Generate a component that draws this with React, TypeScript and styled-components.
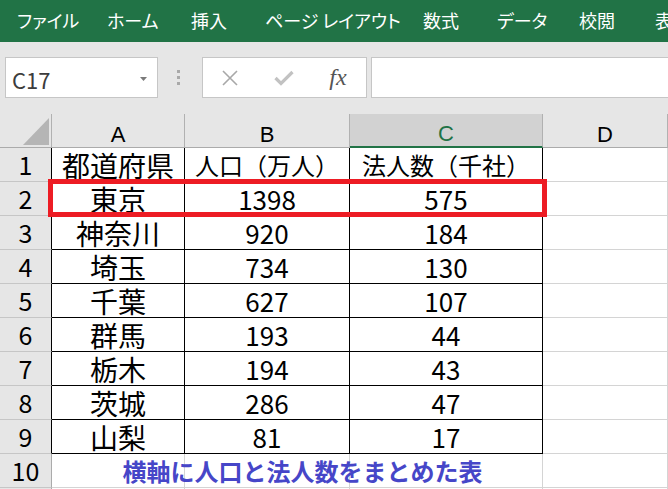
import React from "react";
import styled, { createGlobalStyle } from "styled-components";

const JP = `"Noto Sans CJK JP", "Noto Sans", sans-serif`;

const GlobalStyle = createGlobalStyle`
  html, body {
    margin: 0;
    background: #e6e6e6;
    overflow: hidden;
  }
`;

const Ribbon = styled.nav`
  height: 42px;
  background: #217346;
  display: flex;
  align-items: center;
  padding-left: 17px;
  overflow: hidden;
  white-space: nowrap;
`;

const Tab = styled.span<{ $w?: number }>`
  flex: 0 0 ${(p) => (p.$w ? `${p.$w}px` : "auto")};
  color: #ffffff;
  font-family: ${JP};
  font-size: 18px;
  font-feature-settings: "palt";
  line-height: 1;
  padding-bottom: 3px;
`;

const FormulaBar = styled.div`
  display: flex;
  height: 41px;
  padding: 15px 0 16px 5px;
`;

const NameBox = styled.div`
  width: 153px;
  box-sizing: border-box;
  border: 1px solid #c6c6c6;
  background: #ffffff;
  display: flex;
  align-items: center;
  justify-content: space-between;
  padding: 2px 10px 0 6px;
  font-family: ${JP};
  font-size: 22px;
  line-height: 1;
  color: #3c3c3c;
`;

const Grip = styled.div`
  width: 44px;
  box-sizing: border-box;
  padding-right: 3px;
  display: flex;
  flex-direction: column;
  align-items: center;
  justify-content: center;
  gap: 3px;
`;

const Dot = styled.span`
  width: 3px;
  height: 3px;
  background: #a9a9a9;
`;

const FxBox = styled.div`
  width: 165px;
  box-sizing: border-box;
  border: 1px solid #c6c6c6;
  background: #ffffff;
  display: flex;
`;

const FxSlot = styled.div`
  width: 54px;
  display: flex;
  align-items: center;
  justify-content: center;
`;

const FxLabel = styled.span`
  font-family: "Liberation Serif", serif;
  font-style: italic;
  font-size: 24px;
  color: #555555;
  line-height: 1;
  margin-top: -2px;
`;

const FormulaInput = styled.div`
  flex: 1;
  margin-left: 4px;
  margin-right: -2px;
  border: 1px solid #c6c6c6;
  background: #ffffff;
`;

const Sheet = styled.div`
  position: relative;
  display: grid;
  grid-template-columns: 52px 133px 165px 193px 1fr;
  grid-auto-rows: 34px;
`;

const Corner = styled.div`
  box-sizing: border-box;
  border-right: 1px solid #b1b1b1;
  border-bottom: 1px solid #ababab;
  display: flex;
  align-items: flex-end;
  justify-content: flex-end;
  padding: 0 2px 2px 0;
`;

const ColHeader = styled.div<{ $active?: boolean }>`
  box-sizing: border-box;
  border-right: 1px solid #b1b1b1;
  border-bottom: ${(p) => (p.$active ? "2px solid #217346" : "1px solid #ababab")};
  background: ${(p) => (p.$active ? "#d2d2d2" : "#e6e6e6")};
  color: ${(p) => (p.$active ? "#217346" : "#000000")};
  display: flex;
  align-items: center;
  justify-content: center;
  padding-top: ${(p) => (p.$active ? 8 : 9)}px;
  font-family: "Liberation Sans", Arial, sans-serif;
  font-size: 22px;
  line-height: 1;
`;

const RowHeader = styled.div<{ $edge?: boolean }>`
  box-sizing: border-box;
  border-right: 1px solid ${(p) => (p.$edge ? "#000000" : "#ababab")};
  border-bottom: 1px solid #c6c6c6;
  background: #e6e6e6;
  display: flex;
  align-items: center;
  justify-content: center;
  font-family: ${JP};
  font-size: 25px;
  line-height: 1;
  color: #000000;
`;

const Cell = styled.div<{ $size?: number; $ruled?: boolean; $col?: number; $row?: number }>`
  box-sizing: border-box;
  ${(p) => (p.$row ? `grid-row: ${p.$row};` : "")}
  ${(p) => (p.$col ? `grid-column: ${p.$col};` : "")}
  border-right: 1px solid ${(p) => (p.$ruled ? "#000000" : "#d4d4d4")};
  border-bottom: 1px solid ${(p) => (p.$ruled ? "#000000" : "#d4d4d4")};
  background: #ffffff;
  display: flex;
  align-items: center;
  justify-content: center;
  font-family: ${JP};
  font-size: ${(p) => p.$size ?? 26}px;
  line-height: 1;
  color: #000000;
  white-space: nowrap;
`;

const Caption = styled.div`
  grid-row: 11;
  grid-column: 2 / 5;
  z-index: 1;
  display: flex;
  align-items: center;
  justify-content: center;
  padding-left: 10px;
  font-family: ${JP};
  font-size: 24px;
  font-weight: 700;
  line-height: 1;
  color: #4646c8;
  white-space: nowrap;
`;

const Highlight = styled.div`
  position: absolute;
  left: 48px;
  top: 65px;
  width: 499px;
  height: 38px;
  box-sizing: border-box;
  border: 5px solid #ed1c24;
  pointer-events: none;
  z-index: 2;
`;

const tabs: [string, number?][] = [
  ["ファイル", 90],
  ["ホーム", 84],
  ["挿入", 74],
  ["ページ レイアウト", 158],
  ["数式", 74],
  ["データ", 82],
  ["校閲", 76],
  ["表示"],
];

const rows: [string, string, string][] = [
  ["東京", "1398", "575"],
  ["神奈川", "920", "184"],
  ["埼玉", "734", "130"],
  ["千葉", "627", "107"],
  ["群馬", "193", "44"],
  ["栃木", "194", "43"],
  ["茨城", "286", "47"],
  ["山梨", "81", "17"],
];

export default function App() {
  return (
    <>
      <GlobalStyle />
      <Ribbon>
        {tabs.map(([label, w]) => (
          <Tab key={label} $w={w}>
            {label}
          </Tab>
        ))}
      </Ribbon>

      <FormulaBar>
        <NameBox>
          <span>C17</span>
          <svg width="7" height="4" viewBox="0 0 7 4">
            <polygon points="0,0 7,0 3.5,4" fill="#7a7a7a" />
          </svg>
        </NameBox>
        <Grip>
          <Dot />
          <Dot />
          <Dot />
        </Grip>
        <FxBox>
          <FxSlot>
            <svg width="16" height="16" viewBox="0 0 16 16">
              <path d="M1 1 L15 15 M15 1 L1 15" stroke="#a8a8a8" strokeWidth="1.6" />
            </svg>
          </FxSlot>
          <FxSlot>
            <svg width="20" height="16" viewBox="0 0 20 16">
              <polyline
                points="1.5,8 7,13.5 18.5,2"
                fill="none"
                stroke="#c2c2c2"
                strokeWidth="3.2"
              />
            </svg>
          </FxSlot>
          <FxSlot>
            <FxLabel>fx</FxLabel>
          </FxSlot>
        </FxBox>
        <FormulaInput />
      </FormulaBar>

      <Sheet>
        <Corner>
          <svg width="26" height="27" viewBox="0 0 26 27">
            <polygon points="26,0 26,27 0,27" fill="#b5b5b5" />
          </svg>
        </Corner>
        <ColHeader>A</ColHeader>
        <ColHeader>B</ColHeader>
        <ColHeader $active>C</ColHeader>
        <ColHeader>D</ColHeader>

        <RowHeader $edge>1</RowHeader>
        <Cell $ruled $size={28}>都道府県</Cell>
        <Cell $ruled $size={24}>人口（万人）</Cell>
        <Cell $ruled $size={24}>法人数（千社）</Cell>
        <Cell />

        {rows.map(([pref, pop, corp], i) => (
          <React.Fragment key={pref}>
            <RowHeader $edge>{i + 2}</RowHeader>
            <Cell $ruled $size={28}>{pref}</Cell>
            <Cell $ruled>{pop}</Cell>
            <Cell $ruled>{corp}</Cell>
            <Cell />
          </React.Fragment>
        ))}

        <RowHeader>10</RowHeader>
        <Cell $row={11} $col={2} />
        <Cell $row={11} $col={3} />
        <Cell $row={11} $col={4} />
        <Cell />
        <Caption>横軸に人口と法人数をまとめた表</Caption>

        {/* row 11: only its top edge shows at the bottom of the frame */}
        <RowHeader />
        <Cell />
        <Cell />
        <Cell />
        <Cell />

        <Highlight />
      </Sheet>
    </>
  );
}
